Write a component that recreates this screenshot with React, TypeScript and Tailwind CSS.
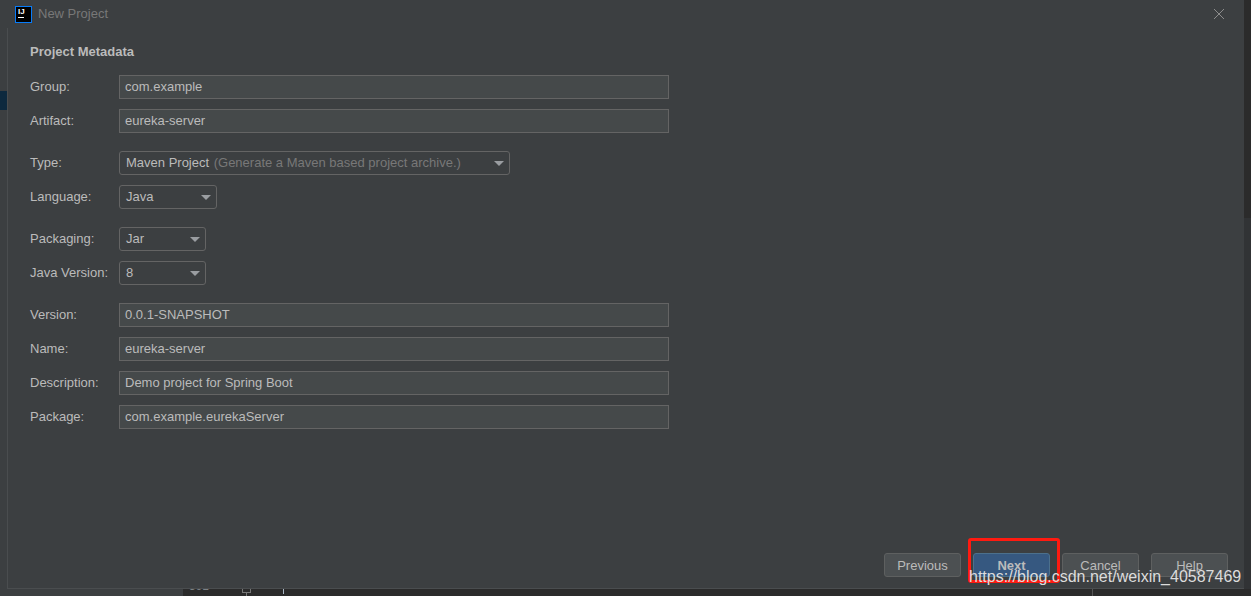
import { ReactNode } from 'react'

const labelClass = 'w-[89px] shrink-0 text-[13px] text-[#bbbbbb]'

function TextRow({ label, value, className = '' }: { label: string, value: string, className?: string }) {
  return (
    <div className={`flex items-center h-6 ${className}`}>
      <span className={labelClass}>{label}</span>
      <div className="w-[550px] h-6 flex items-center px-[5px] border border-[#646464] bg-[#45494a] text-[13px] text-[#bbbbbb]">
        {value}
      </div>
    </div>
  )
}

function SelectRow({ label, width, children, className = '' }: { label: string, width: string, children: ReactNode, className?: string }) {
  return (
    <div className={`flex items-center h-6 ${className}`}>
      <span className={labelClass}>{label}</span>
      <div className={`${width} h-6 flex items-center justify-between pl-[6px] pr-[5px] border border-[#646464] rounded-[3px] text-[13px] text-[#bbbbbb]`}>
        <span className="whitespace-nowrap">{children}</span>
        <span className="w-0 h-0 border-x-[5px] border-x-transparent border-t-[5px] border-t-[#9a9da1]" />
      </div>
    </div>
  )
}

function FooterButton({ label, primary }: { label: string, primary?: boolean }) {
  return (
    <div className={`w-[77px] h-6 flex items-center justify-center pt-[1px] rounded-[3px] border text-[13px] ${primary ? 'border-[#4c708c] bg-[#365880] font-bold text-[#bbbbbb]' : 'border-[#5e6060] bg-[#4c5052] text-[#bbbbbb]'}`}>
      {label}
    </div>
  )
}

export default function App() {
  return (
    <div className="relative w-[1251px] h-[596px] overflow-hidden bg-[#2b2b2b] font-['Liberation_Sans',Arial,sans-serif]">
      {/* Dialog */}
      <div className="flex flex-col w-[1244px] h-[589px] bg-[#3c3f41]">
        <header className="flex items-center h-7 pl-[15px] pr-[20px]">
          <div className="w-[17px] h-[17px] bg-black border-[1.5px] border-[#087cfa] flex flex-col pl-[2px] pt-[1px]">
            <span className="text-[8px] leading-[8px] font-bold text-white">IJ</span>
            <span className="w-[6px] h-[1px] mt-[1px] bg-white" />
          </div>
          <span className="ml-[6px] text-[13px] text-[#787878]">New Project</span>
          <svg className="ml-auto" width="10" height="10" viewBox="0 0 10 10" fill="none" stroke="#8c8c8c" strokeWidth="1">
            <path d="M0 0 L10 10 M10 0 L0 10" />
          </svg>
        </header>

        <div className="flex flex-col flex-1 ml-[7px] border-l border-b border-[#4a4d4f]">
          <main className="flex-1 pl-[22px] pt-[16px]">
            <h2 className="text-[13px] leading-4 font-bold text-[#bbbbbb] mb-[15px]">Project Metadata</h2>
            <TextRow label="Group:" value="com.example" />
            <TextRow label="Artifact:" value="eureka-server" className="mt-[10px]" />
            <SelectRow label="Type:" width="w-[391px]" className="mt-[18px]">
              Maven Project <span className="ml-px text-[#787878]">(Generate a Maven based project archive.)</span>
            </SelectRow>
            <SelectRow label="Language:" width="w-[98px]" className="mt-[10px]">Java</SelectRow>
            <SelectRow label="Packaging:" width="w-[87px]" className="mt-[18px]">Jar</SelectRow>
            <SelectRow label="Java Version:" width="w-[87px]" className="mt-[10px]">8</SelectRow>
            <TextRow label="Version:" value="0.0.1-SNAPSHOT" className="mt-[18px]" />
            <TextRow label="Name:" value="eureka-server" className="mt-[10px]" />
            <TextRow label="Description:" value="Demo project for Spring Boot" className="mt-[10px]" />
            <TextRow label="Package:" value="com.example.eurekaServer" className="mt-[10px]" />
          </main>
          <footer className="flex justify-end gap-[12px] pr-[16px] pb-[11px]">
            <FooterButton label="Previous" />
            <FooterButton label="Next" primary />
            <FooterButton label="Cancel" />
            <FooterButton label="Help" />
          </footer>
        </div>
      </div>

      {/* Editor behind the dialog */}
      <div className="absolute left-0 top-[91px] w-[7px] h-[19px] bg-[#0d293e]" />
      <div className="absolute left-0 top-[589px] w-[183px] h-[7px] bg-[#3c3f41]" />
      <div className="absolute left-[183px] right-0 top-[589px] h-[7px] overflow-hidden bg-[#2b2b2b]">
        <span className="absolute left-[6px] top-[-9px] text-[12px] leading-3 text-[#7d8285]">391</span>
        <div className="absolute left-[59px] top-0 w-[9px] h-[4px] border-x border-b border-[#777777]" />
        <div className="absolute left-[63px] top-[4px] w-px h-[3px] bg-[#777777]" />
        <div className="absolute left-[99px] top-0 w-[2px] h-[5px] border-r border-[#a9b7c6]" />
        <div className="absolute left-[909px] top-0 w-px h-[7px] bg-[#555555]" />
      </div>
      <div className="absolute right-0 top-[218px] w-[7px] h-[371px] bg-[#313335]" />

      {/* Red highlight and watermark over the shot */}
      <div className="absolute left-[968px] top-[538px] w-[92px] h-[45px] border-[3px] border-[#ff1a10] rounded-[3px]" />
      <span className="absolute left-[969px] top-[567px] text-[16px] leading-5 text-[#dcdcdc] whitespace-nowrap">https://blog.csdn.net/weixin_40587469</span>
    </div>
  )
}
